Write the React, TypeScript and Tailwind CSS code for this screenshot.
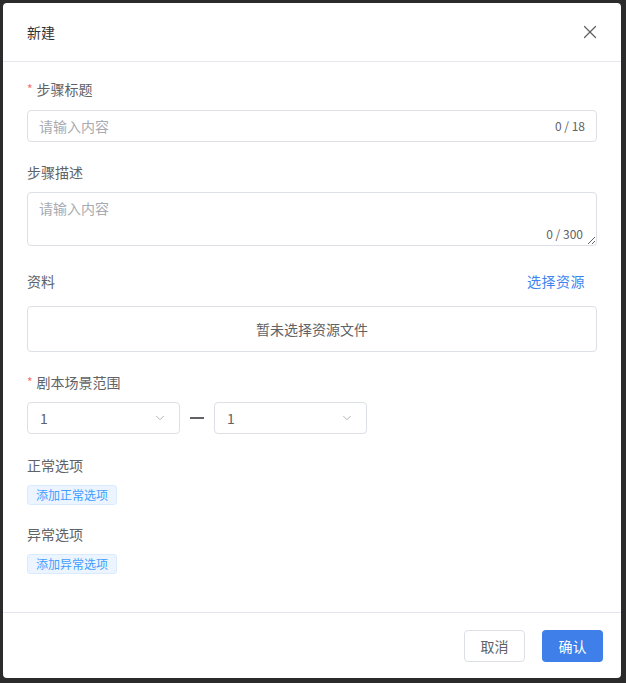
import { X, ChevronDown } from "lucide-react";

const font = { fontFamily: '"Noto Sans CJK SC", "Noto Sans", sans-serif' };

function Label({ text, required }: { text: string; required?: boolean }) {
  return (
    <div className="h-5 flex items-center text-sm text-[#606266] leading-5">
      {required && <span className="text-[#f56c6c] mr-1 text-xs">*</span>}
      {text}
    </div>
  );
}

function SelectBox({ value }: { value: string }) {
  return (
    <div className="w-[153px] h-8 border border-[#dcdfe6] rounded-[4px] flex items-center justify-between pl-3 pr-3 text-sm text-[#606266]">
      <span>{value}</span>
      <ChevronDown className="w-[14px] h-[14px] text-[#a8abb2]" strokeWidth={1.5} />
    </div>
  );
}

export default function App() {
  return (
    <div className="min-h-screen bg-[#2b2b2b] p-[3px]" style={font}>
      <div className="w-[618px] h-[675px] bg-white rounded-[4px] flex flex-col">
        {/* Header */}
        <div className="h-[59px] shrink-0 flex items-center justify-between pl-6 pr-[20px] border-b border-[#e4e7ed]">
          <span className="text-sm text-[#303133]">新建</span>
          <X className="w-[22px] h-[22px] text-[#606266]" strokeWidth={1.3} />
        </div>

        {/* Body */}
        <div className="flex-1 px-6 pt-[17px]">
          <Label text="步骤标题" required />
          <div className="relative mt-[11px]">
            <input
              className="w-full h-8 border border-[#dcdfe6] rounded-[4px] pl-[11px] pr-14 text-sm outline-none placeholder:text-[#a8abb2]"
              placeholder="请输入内容"
            />
            <span className="absolute right-3 top-0 h-8 flex items-center text-xs text-[#606266]">0 / 18</span>
          </div>

          <div className="mt-5">
            <Label text="步骤描述" />
          </div>
          <div className="relative mt-[10px]">
            <textarea
              className="block w-full h-[54px] border border-[#dcdfe6] rounded-[4px] px-[11px] py-[5px] text-sm outline-none resize-y placeholder:text-[#a8abb2]"
              placeholder="请输入内容"
            />
            <span className="absolute right-[14px] bottom-[4px] text-xs text-[#606266]">0 / 300</span>
          </div>

          <div className="mt-[25px] flex items-center justify-between pr-[12px]">
            <Label text="资料" />
            <span className="text-sm text-[#3e84f0] tracking-[0.5px]">选择资源</span>
          </div>
          <div className="mt-[15px] h-[46px] border border-[#dcdfe6] rounded-[4px] flex items-center justify-center text-sm text-[#606266]">
            暂未选择资源文件
          </div>

          <div className="mt-5">
            <Label text="剧本场景范围" required />
          </div>
          <div className="mt-[10px] flex items-center">
            <SelectBox value="1" />
            <div className="w-[14px] h-[2px] bg-[#606266] mx-[10px]" />
            <SelectBox value="1" />
          </div>

          <div className="mt-[21px]">
            <Label text="正常选项" />
          </div>
          <div className="mt-[6px]">
            <span className="inline-flex items-center h-5 px-2 rounded-[3px] border border-[#d9ecff] bg-[#ecf5ff] text-xs text-[#409eff]">
              添加正常选项
            </span>
          </div>

          <div className="mt-[19px]">
            <Label text="异常选项" />
          </div>
          <div className="mt-[6px]">
            <span className="inline-flex items-center h-5 px-2 rounded-[3px] border border-[#d9ecff] bg-[#ecf5ff] text-xs text-[#409eff]">
              添加异常选项
            </span>
          </div>
        </div>

        {/* Footer */}
        <div className="h-[66px] shrink-0 border-t border-[#e4e7ed] flex items-center justify-end gap-[17px] pr-[18px]">
          <button className="w-[61px] h-8 border border-[#dcdfe6] rounded-[4px] text-sm text-[#606266] bg-white">
            取消
          </button>
          <button className="w-[61px] h-8 rounded-[4px] text-sm text-white bg-[#3e7fe9]">
            确认
          </button>
        </div>
      </div>
    </div>
  );
}
